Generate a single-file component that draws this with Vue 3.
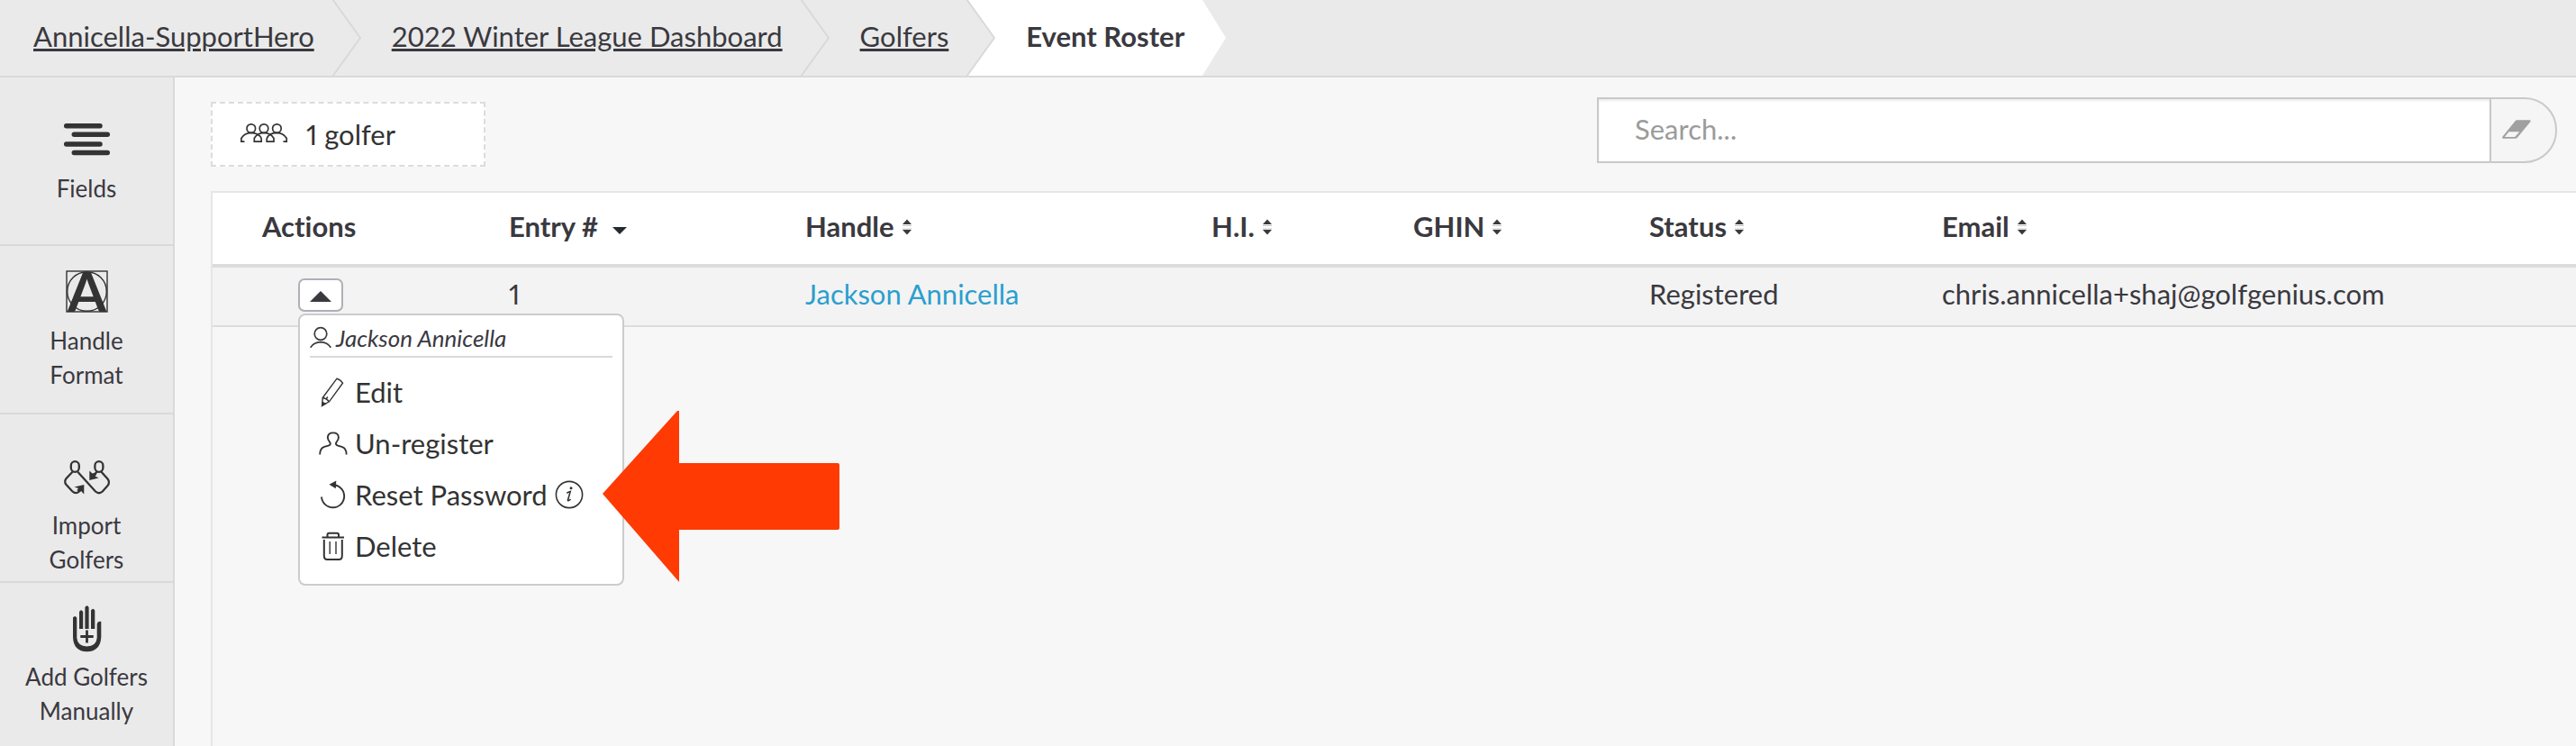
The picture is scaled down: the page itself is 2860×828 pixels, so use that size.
<script setup>
import { ref } from 'vue'

const crumbs = ['Annicella-SupportHero', '2022 Winter League Dashboard', 'Golfers']
const tools = [
  { id: 'fields', lines: ['Fields'] },
  { id: 'handle', lines: ['Handle', 'Format'] },
  { id: 'import', lines: ['Import', 'Golfers'] },
  { id: 'add', lines: ['Add Golfers', 'Manually'] },
]
const columns = [
  { id: 'handle', label: 'Handle' },
  { id: 'hi', label: 'H.I.' },
  { id: 'ghin', label: 'GHIN' },
  { id: 'status', label: 'Status' },
  { id: 'email', label: 'Email' },
]
const query = ref('')
const menuOpen = ref(true)
</script>

<template>
  <div class="page">
    <nav class="crumbs" aria-label="Breadcrumb">
      <template v-for="(crumb, i) in crumbs" :key="crumb">
        <a class="crumb" href="#">{{ crumb }}</a>
        <svg class="chevron" viewBox="0 0 32 84" aria-hidden="true">
          <path v-if="i === crumbs.length - 1" d="M0 0 L31 42 L0 84 H32 V0 Z" fill="#fff" />
          <path d="M0 -1 L31 42 L0 85" fill="none" stroke="#d9d9d9" stroke-width="2" />
        </svg>
      </template>
      <span class="crumb current" aria-current="page">Event Roster</span>
      <svg class="tip" viewBox="0 0 26 84" aria-hidden="true"><path d="M0 0 L26 42 L0 84 Z" fill="#fff" /></svg>
    </nav>

    <div class="body">
      <aside class="sidebar">
        <button v-for="tool in tools" :key="tool.id" type="button" class="tool" :class="tool.id">
          <svg v-if="tool.id === 'fields'" class="tool-icon" viewBox="0 0 52 52" aria-hidden="true">
            <g stroke="#333" stroke-width="5.5" stroke-linecap="round">
              <path d="M3.7 10.7H41M12.3 20.2H49.3M3.7 31H41M12.3 40.5H49.3" />
            </g>
          </svg>
          <svg v-else-if="tool.id === 'handle'" class="tool-icon" viewBox="0 0 52 52" aria-hidden="true">
            <g fill="none" stroke="#333" stroke-width="1.4">
              <rect x="4" y="3" width="45" height="45" />
              <circle cx="26.5" cy="25.5" r="21.8" />
            </g>
            <text class="letter" x="26.5" y="48" text-anchor="middle">A</text>
          </svg>
          <svg v-else-if="tool.id === 'import'" class="tool-icon" viewBox="0 0 52 52" aria-hidden="true">
            <g fill="none" stroke="#333" stroke-width="2.3">
              <rect x="8.8" y="9.2" width="9" height="11.6" rx="4.5" />
              <rect x="35.4" y="9.2" width="9" height="11.6" rx="4.5" />
              <path d="M10.5 20.8 L3.6 28 Q0.7 31.5 3.6 35 L10 42 Q14 46 18 42.5 L20 40.5" />
              <path d="M16.3 20.8 L36 42.5 Q40 46 43.8 42.5 L49.5 36 Q52.4 32.5 49.5 28.5 L42.5 20.8" />
              <path d="M37.5 20.8 L33.5 25.5" />
            </g>
            <path d="M12.5 37.5 L23.3 35 V45.5 L20 42 L17 43 L15.5 41 L17 39 Z M29.3 19.5 L32.5 22.5 L36 21.5 L37 24 L35.5 25.5 L39.5 27.5 L29.3 30 Z" fill="#333" />
          </svg>
          <svg v-else class="tool-icon" viewBox="0 0 52 52" aria-hidden="true">
            <path d="M11 14.5 Q13 11.5 15.3 14.5 V37 Q16 46 26.5 46.5 Q37 46 37.7 37 V22 Q38.5 18 42.3 19 V36 Q41.5 52 26.5 52.3 Q11.5 52 11 36 Z" fill="#333" />
            <path d="M18 27 V8 Q20 4.5 22.2 8 V27 Z M24.4 27 V3 Q26.5 -0.5 28.6 3 V27 Z M31 27 V6.5 Q33.2 3 35.3 6.5 V27 Z" fill="#333" />
            <path d="M26.5 28.5V42.5M19.3 35.5H33.7" stroke="#333" stroke-width="2.8" />
          </svg>
          <span class="tool-label"><span v-for="line in tool.lines" :key="line">{{ line }}</span></span>
        </button>
      </aside>

      <main class="content">
        <div class="toolbar">
          <div class="count">
            <svg class="count-icon" viewBox="0 0 52 24" fill="none" stroke="#333" stroke-width="1.7" aria-hidden="true">
              <circle cx="11.8" cy="5.6" r="4.8" />
              <circle cx="26" cy="5.6" r="4.8" />
              <circle cx="40.4" cy="5.6" r="4.8" />
              <path d="M4.5 20.2 H0.9 V16.5 Q4.5 10.5 11.8 10.4 Q17.5 10.6 21 13.5 Q23 15 23.2 17 V20.2 H15.3 V16.5 Q18.5 10.5 26 10.4 Q33.5 10.5 37 16.5 V20.2 H29.2 V17 Q31 10.8 40.4 10.4 Q47.5 10.5 51.2 16.5 V20.2 H47.5" />
            </svg>
            <span>1 golfer</span>
          </div>
          <form class="search" role="search" @submit.prevent>
            <input v-model="query" class="search-input" type="text" placeholder="Search..." aria-label="Search" />
            <button class="clear" type="button" aria-label="Clear search" @click="query = ''">
              <svg class="eraser" viewBox="0 0 34 24" aria-hidden="true">
                <path d="M17.5 1.2 H31 Q33.5 1.2 32.3 3.2 L18 20.5 Q17 21.8 15.5 21.8 H2.5 Q0 21.8 1.6 19.6 L15.5 2.3 Q16.3 1.2 17.5 1.2 Z" fill="#a0a0a0" />
                <path d="M8.5 14.3 H20.3 L15.2 20 H3.8 Z" fill="#f5f5f5" />
              </svg>
            </button>
          </form>
        </div>

        <div class="roster">
          <table class="grid">
            <colgroup>
              <col class="c-actions" /><col class="c-entry" /><col class="c-handle" /><col class="c-hi" />
              <col class="c-ghin" /><col class="c-status" /><col />
            </colgroup>
            <thead>
              <tr>
                <th class="first" scope="col">Actions</th>
                <th scope="col" aria-sort="descending">
                  <button class="sort sorted" type="button">
                    Entry #
                    <svg class="caret" viewBox="0 0 16 20" aria-hidden="true"><path d="M0 11 H16 L8 19 Z" fill="#232b30" /></svg>
                  </button>
                </th>
                <th v-for="col in columns" :key="col.id" scope="col">
                  <button class="sort" type="button">
                    {{ col.label }}
                    <svg class="updown" viewBox="0 0 12 20" aria-hidden="true">
                      <path d="M1 8 L6 2.5 L11 8 Z M1 14 H11 L6 19.5 Z" fill="#3a393f" />
                      <path d="M1 9.5H11M1 13H11" stroke="#c4c4c4" />
                    </svg>
                  </button>
                </th>
              </tr>
            </thead>
            <tbody>
              <tr>
                <td class="actions">
                  <div class="anchor">
                    <button class="toggle" type="button" aria-label="Actions for Jackson Annicella" :aria-expanded="menuOpen" @click="menuOpen = !menuOpen">
                      <svg class="up" viewBox="0 0 24 12" aria-hidden="true"><path d="M12 0 L24 12 H0 Z" fill="#3a393f" /></svg>
                    </button>
                    <div v-if="menuOpen" class="menu">
                      <div class="menu-head">
                        <svg class="head-icon" viewBox="0 0 24 24" fill="none" stroke="#3a393f" stroke-width="1.7" aria-hidden="true">
                          <circle cx="12" cy="7.5" r="6.8" />
                          <path d="M0.7 22.8 Q4.5 16.8 12 16.7 Q19.5 16.8 23.3 22.8" />
                        </svg>
                        <em>Jackson Annicella</em>
                      </div>
                      <button class="item" type="button">
                        <svg class="item-icon" viewBox="0 0 32 32" fill="none" stroke="#333" stroke-width="1.4" aria-hidden="true">
                          <path d="M4.2 22.5 L20 1.2 Q23.5 2 26.5 6.2 L11.5 26.8 L3.7 31 Z" />
                          <path d="M4.2 22.5 Q8.5 23 11.5 26.8 M8 24 L9.8 21.5" />
                          <path d="M4.3 27.5 L7.2 29.3 L3.5 31.4 Z" fill="#333" />
                        </svg>
                        Edit
                      </button>
                      <button class="item" type="button">
                        <svg class="item-icon" viewBox="0 0 32 32" fill="none" stroke="#333" stroke-width="1.9" aria-hidden="true">
                          <path d="M1.2 28.5 Q1 21.5 6.2 19.8 L10.5 18.7 Q14 17.5 12.2 14.8 Q9.8 12 9.8 9.5 Q10.2 4.4 15.8 4.4 Q21.6 4.4 21.9 9.5 Q21.9 12 19.5 14.8 Q17.8 17.5 21.2 18.7 L25.4 19.8 Q30.8 21.5 30.6 28.5" />
                        </svg>
                        Un-register
                      </button>
                      <button class="item" type="button">
                        <svg class="item-icon" viewBox="0 0 32 32" aria-hidden="true">
                          <path d="M3 18.5 A12.6 12.6 0 1 0 17 5.2" fill="none" stroke="#333" stroke-width="1.9" />
                          <path d="M11.5 4.8 L19.3 0.5 L18.8 9.3 Z" fill="#333" />
                        </svg>
                        Reset Password
                        <svg class="info" viewBox="0 0 32 32" aria-hidden="true">
                          <circle cx="16" cy="16" r="14.6" fill="none" stroke="#333" stroke-width="1.6" />
                          <circle cx="18" cy="8.8" r="1.5" fill="#333" />
                          <path d="M13.3 14.2 Q15.2 13.3 17.2 12.6 L14.4 22.2 Q14.2 23.8 17.6 21.2" fill="none" stroke="#333" stroke-width="1.6" />
                        </svg>
                      </button>
                      <button class="item" type="button">
                        <svg class="item-icon" viewBox="0 0 32 32" fill="none" stroke="#333" stroke-width="2" aria-hidden="true">
                          <path d="M3.5 6.5 H28 M9.5 6 V3.6 Q9.5 1.8 11.5 1.8 H20 Q22 1.8 22 3.6 V6" />
                          <path d="M5.8 9 V27 Q5.8 31 9.3 31 H22.3 Q25.8 31 25.8 27 V9" />
                          <path d="M12.2 11 V25 M19 11 V25" stroke-width="1.4" />
                        </svg>
                        Delete
                      </button>
                    </div>
                    <svg v-if="menuOpen" class="pointer" viewBox="0 0 263 190" aria-hidden="true">
                      <path d="M0 92 L83 0 H85 V58 H261 Q263 58 263 60 V130 Q263 132 261 132 H85 V190 Z" fill="#ff3a03" />
                    </svg>
                  </div>
                </td>
                <td class="entry">1</td>
                <td><a class="player" href="#">Jackson Annicella</a></td>
                <td></td>
                <td></td>
                <td>Registered</td>
                <td>chris.annicella+shaj@golfgenius.com</td>
              </tr>
            </tbody>
          </table>
        </div>
      </main>
    </div>
  </div>
</template>

<style>
body { margin: 0; }
</style>

<style scoped>
.page {
  display: flex;
  flex-direction: column;
  height: 100vh;
  overflow: hidden;
  background: #f7f7f7;
  color: #3a393f;
  font-family: Lato, "Liberation Sans", sans-serif;
  font-size: 31px;
  font-variant-ligatures: none;
}
.page * { box-sizing: border-box; }
button, input {
  font: inherit;
  font-variant-ligatures: none;
  color: inherit;
  margin: 0;
  border: 0;
  padding: 0;
  background: none;
}
button { cursor: pointer; }
svg { display: block; flex: none; overflow: visible; }

.crumbs {
  display: flex;
  flex: none;
  background: #eaeaea;
  border-bottom: 2px solid #d9d9d9;
}
.crumb {
  padding: 0 20px 4px 34px;
  line-height: 80px;
  color: inherit;
  white-space: nowrap;
  text-decoration: underline;
  text-decoration-thickness: 3px;
  text-underline-offset: 2px;
}
.crumb:first-child { padding-left: 37px; }
.crumb.current { background: #fff; font-weight: 700; text-decoration: none; }
.chevron { width: 32px; height: 84px; overflow: hidden; }
.tip { width: 26px; height: 84px; }

.body { display: flex; flex: 1; min-height: 0; }
.sidebar {
  display: flex;
  flex-direction: column;
  flex: none;
  width: 194px;
  background: #eaeaea;
  border-right: 2px solid #d9d9d9;
}
.tool {
  display: flex;
  flex: none;
  flex-direction: column;
  align-items: center;
  justify-content: flex-start;
  gap: 9px;
  height: 187px;
  padding-top: 25px;
  border-bottom: 2px solid #d9d9d9;
  font-size: 26px;
  line-height: 38px;
}
.tool.fields, .tool.import { padding-top: 43px; }
.tool.add { flex: 1; min-height: 0; padding-top: 24px; border-bottom: 0; }
.tool-icon { width: 52px; height: 52px; }
.tool-label { display: flex; flex-direction: column; align-items: center; }
.letter { font-size: 62px; font-weight: 700; line-height: 1; fill: #333; }

.content { display: flex; flex: 1; flex-direction: column; min-width: 0; }
.toolbar {
  display: flex;
  justify-content: space-between;
  align-items: flex-end;
  gap: 40px;
  padding: 22px 21px 27px 40px;
}
.count {
  display: flex;
  align-items: center;
  gap: 21px;
  width: 305px;
  height: 72px;
  margin-top: 5px;
  padding-left: 31px;
  background: #fff;
  border: 2px dashed #dcdcdc;
  color: #333;
  font-variant-numeric: proportional-nums;
}
.count-icon { width: 52px; height: 24px; }
.search { display: flex; flex: 0 1 1066px; height: 73px; align-self: flex-start; }
.search-input {
  flex: 1;
  min-width: 0;
  padding: 0 20px 4px 40px;
  background: #fff;
  border: 2px solid #c9c9c9;
  border-right: 0;
  box-shadow: inset 0 2px 3px #ebebeb;
  outline: 0;
}
.search-input::placeholder { color: #9b9b9b; opacity: 1; }
.clear {
  display: flex;
  align-items: center;
  width: 75px;
  padding: 0 0 2px 11px;
  background: #f5f5f5;
  border: 2px solid #c9c9c9;
  border-radius: 0 36px 36px 0;
}
.eraser { width: 34px; height: 24px; }

.roster {
  flex: 1;
  margin-left: 40px;
  border: solid #e6e6e6;
  border-width: 2px 0 0 2px;
}
.grid { width: 100%; table-layout: fixed; border-collapse: separate; border-spacing: 0; }
.c-actions { width: 309px; }
.c-entry { width: 329px; }
.c-handle { width: 451px; }
.c-hi { width: 224px; }
.c-ghin { width: 262px; }
.c-status { width: 325px; }
th, td { padding: 0 0 6px 20px; text-align: left; white-space: nowrap; }
th {
  height: 83px;
  background: #fff;
  border-bottom: 4px solid #dcdcdc;
  font-weight: 700;
}
th.first { padding-left: 55px; }
td { height: 66px; background: #f3f3f3; border-bottom: 2px solid #dcdcdc; }
td.entry { font-variant-numeric: proportional-nums; }
.sort { display: flex; align-items: center; gap: 8px; }
.sorted { gap: 16px; }
.updown { width: 12px; height: 20px; }
.caret { width: 16px; height: 20px; }
.player { color: #2a9fce; text-decoration: none; }

td.actions { padding: 12px 0 15px 95px; }
.anchor { position: relative; }
.toggle {
  display: flex;
  align-items: center;
  justify-content: center;
  width: 50px;
  height: 37px;
  padding-top: 3px;
  background: #fff;
  border: 2px solid #b0aeb6;
  border-radius: 7px;
}
.up { width: 24px; height: 12px; }
.menu {
  position: absolute;
  top: 39px;
  left: 0;
  z-index: 2;
  width: 362px;
  padding-bottom: 15px;
  background: #fff;
  border: 2px solid #ccc;
  border-radius: 8px;
}
.menu-head {
  display: flex;
  align-items: center;
  gap: 5px;
  height: 47px;
  margin: 0 11px 8px;
  padding-top: 5px;
  border-bottom: 2px solid #d9d9d9;
  font-size: 26px;
}
.head-icon { width: 24px; height: 24px; }
.item {
  display: flex;
  align-items: center;
  gap: 8px;
  width: 100%;
  height: 57px;
  padding: 2px 0 0 21px;
  color: #333;
}
.item-icon, .info { width: 32px; height: 32px; }
.pointer {
  position: absolute;
  top: 147px;
  left: 338px;
  z-index: 3;
  width: 263px;
  height: 190px;
}
</style>
